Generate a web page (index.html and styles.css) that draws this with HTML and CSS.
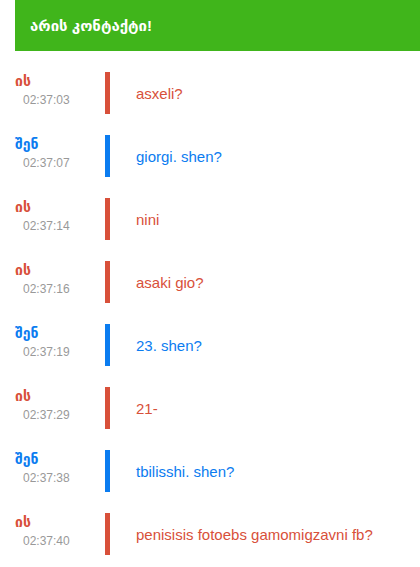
FILE: index.html
```html
<!DOCTYPE html>
<html lang="ka">
<head>
    <meta charset="UTF-8">
    <title>ჩატი</title>
    <link rel="stylesheet" href="styles.css">
</head>
<body>
    <div class="header">არის კონტაქტი!</div>

    <div class="messages">
        <div class="msg them">
            <div class="who"><div class="name">ის</div><div class="time">02:37:03</div></div>
            <div class="bar"></div>
            <div class="text">asxeli?</div>
        </div>
        <div class="msg me">
            <div class="who"><div class="name">შენ</div><div class="time">02:37:07</div></div>
            <div class="bar"></div>
            <div class="text">giorgi. shen?</div>
        </div>
        <div class="msg them">
            <div class="who"><div class="name">ის</div><div class="time">02:37:14</div></div>
            <div class="bar"></div>
            <div class="text">nini</div>
        </div>
        <div class="msg them">
            <div class="who"><div class="name">ის</div><div class="time">02:37:16</div></div>
            <div class="bar"></div>
            <div class="text">asaki gio?</div>
        </div>
        <div class="msg me">
            <div class="who"><div class="name">შენ</div><div class="time">02:37:19</div></div>
            <div class="bar"></div>
            <div class="text">23. shen?</div>
        </div>
        <div class="msg them">
            <div class="who"><div class="name">ის</div><div class="time">02:37:29</div></div>
            <div class="bar"></div>
            <div class="text">21-</div>
        </div>
        <div class="msg me">
            <div class="who"><div class="name">შენ</div><div class="time">02:37:38</div></div>
            <div class="bar"></div>
            <div class="text">tbilisshi. shen?</div>
        </div>
        <div class="msg them">
            <div class="who"><div class="name">ის</div><div class="time">02:37:40</div></div>
            <div class="bar"></div>
            <div class="text">penisisis fotoebs gamomigzavni fb?</div>
        </div>
    </div>
</body>
</html>
```

FILE: styles.css
```css
* {
    margin: 0;
    padding: 0;
    box-sizing: border-box;
}

body {
    font-family: "Liberation Sans", Arial, "DejaVu Sans", sans-serif;
    background-color: #fff;
    overflow: hidden;
}

.header {
    margin-left: 15px;
    height: 51px;
    line-height: 51px;
    padding-left: 15px;
    background-color: #40b51b;
    color: #fff;
    font-weight: bold;
    font-size: 15px;
}

.messages {
    padding-top: 21px;
}

.msg {
    display: flex;
    height: 42px;
    margin-bottom: 21px;
}

.who {
    width: 105px;
    padding-left: 15px;
    padding-top: 1px;
}

.name {
    font-weight: bold;
    font-size: 14px;
    line-height: 16px;
}

.time {
    margin-top: 4px;
    padding-left: 8px;
    font-size: 12px;
    line-height: 14px;
    color: #999;
}

.bar {
    width: 5px;
}

.text {
    display: flex;
    align-items: center;
    padding-left: 26px;
    padding-top: 1px;
    font-size: 15px;
}

.them .name,
.them .text {
    color: #d8503a;
}

.them .bar {
    background-color: #d8503a;
}

.me .name,
.me .text {
    color: #0b7cf0;
}

.me .bar {
    background-color: #0b7cf0;
}
```
